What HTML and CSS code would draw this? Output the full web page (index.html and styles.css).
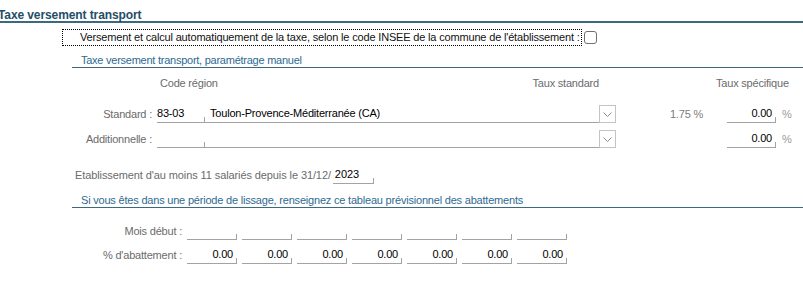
FILE: index.html
```html
<!DOCTYPE html>
<html lang="fr">
<head>
    <meta charset="UTF-8">
    <title>Taxe versement transport</title>
    <link rel="stylesheet" href="styles.css">
</head>
<body>

    <div class="title">Taxe versement transport</div>

    <div class="content">
        <div class="auto-row">
            <label class="focus">Versement et calcul automatiquement de la taxe, selon le code INSEE de la commune de l'établissement :</label>
            <span class="checkbox"></span>
        </div>

        <div class="section">Taxe versement transport, paramétrage manuel</div>

        <div class="rates rates-head">
            <div class="head-code">Code région</div>
            <div class="head-std">Taux standard</div>
            <div class="head-spec">Taux spécifique</div>
        </div>

        <div class="rates">
            <div class="label">Standard :</div>
            <div class="field code">83-03</div>
            <div class="combo">
                <span class="combo-text">Toulon-Provence-Méditerranée (CA)</span>
                <span class="combo-btn"><svg width="9" height="5" viewBox="0 0 9 5"><path d="M0.5 0.5 L4.5 4.5 L8.5 0.5" fill="none" stroke="#8a8a8a" stroke-width="1"/></svg></span>
            </div>
            <div class="std-rate">1.75 %</div>
            <div class="field num spec">0.00</div>
            <div class="pct">%</div>

            <div class="label">Additionnelle :</div>
            <div class="field code"></div>
            <div class="combo">
                <span class="combo-text"></span>
                <span class="combo-btn"><svg width="9" height="5" viewBox="0 0 9 5"><path d="M0.5 0.5 L4.5 4.5 L8.5 0.5" fill="none" stroke="#8a8a8a" stroke-width="1"/></svg></span>
            </div>
            <div class="std-rate"></div>
            <div class="field num spec">0.00</div>
            <div class="pct">%</div>
        </div>

        <div class="etab">
            <span>Etablissement d'au moins 11 salariés depuis le 31/12/</span>
            <span class="field year">2023</span>
        </div>

        <div class="section">Si vous êtes dans une période de lissage, renseignez ce tableau prévisionnel des abattements</div>

        <div class="lissage">
            <div class="label">Mois début :</div>
            <div class="field"></div>
            <div class="field"></div>
            <div class="field"></div>
            <div class="field"></div>
            <div class="field"></div>
            <div class="field"></div>
            <div class="field"></div>

            <div class="label">% d'abattement :</div>
            <div class="field num">0.00</div>
            <div class="field num">0.00</div>
            <div class="field num">0.00</div>
            <div class="field num">0.00</div>
            <div class="field num">0.00</div>
            <div class="field num">0.00</div>
            <div class="field num">0.00</div>
        </div>
    </div>

</body>
</html>
```

FILE: styles.css
```css
* {
    margin: 0;
    padding: 0;
    box-sizing: border-box;
}

body {
    font-family: "Liberation Sans", Arial, sans-serif;
    font-size: 11px;
    letter-spacing: -0.2px;
    color: #6b6b6b;
    background: #fff;
    width: 803px;
    height: 283px;
    overflow: hidden;
}

.title {
    font-weight: bold;
    font-size: 12px;
    letter-spacing: -0.1px;
    line-height: 12px;
    color: #1f4d69;
    padding-top: 9px;
    text-indent: -2px;
    border-bottom: 2px solid #3b6a7e;
}

.content {
    margin-left: 62px;
}

/* checkbox line */
.auto-row {
    display: flex;
    align-items: center;
    margin-top: 6px;
    height: 17px;
}

.focus {
    border: 1px dotted #000;
    color: #111;
    height: 17px;
    line-height: 15px;
    letter-spacing: -0.17px;
    padding: 0 1px 0 17px;
}

.checkbox {
    width: 13px;
    height: 13px;
    margin-left: 2px;
    border: 1px solid #6f6f6f;
    border-radius: 3px;
    background: #fff;
}

.section {
    margin-left: 10px;
    padding-left: 9px;
    color: #2e6a92;
    line-height: 13px;
    letter-spacing: -0.25px;
    border-bottom: 1px solid #3b6a7e;
}

.auto-row + .section {
    margin-top: 8px;
}

/* rates table */
.rates {
    display: grid;
    grid-template-columns: 85px 48px 394px 17px 89px 22px 49px 27px;
    grid-template-rows: 18px 18px;
    row-gap: 7px;
    margin-left: 10px;
    align-items: center;
}

.rates-head {
    grid-template-rows: 21px;
    margin-bottom: 7px;
    align-items: start;
    padding-top: 9px;
    line-height: 13px;
}

.rates-head div {
    grid-row: 1;
}

.head-code {
    grid-column: 2 / 4;
    padding-left: 3px;
}

.head-std {
    grid-column: 3 / 4;
    text-align: right;
}

.head-spec {
    grid-column: 6 / 9;
    padding-left: 11px;
}

.label {
    text-align: right;
    padding-right: 5px;
    line-height: 18px;
}

.field {
    position: relative;
    height: 18px;
    line-height: 17px;
    padding: 0 3px;
    color: #000;
    border-bottom: 1px solid #a3a3a3;
}

.field::after {
    content: '';
    position: absolute;
    right: 0;
    bottom: 0;
    width: 1px;
    height: 5px;
    background: #a3a3a3;
}

.field.num {
    text-align: right;
    padding-right: 4px;
}

.field.code {
    padding-left: 0;
}

.combo {
    grid-column: 3 / 5;
    display: flex;
    height: 18px;
}

.combo-text {
    flex: 1;
    color: #000;
    line-height: 17px;
    padding-left: 5px;
    border-bottom: 1px solid #a3a3a3;
}

.combo-btn {
    width: 17px;
    height: 18px;
    border: 1px solid #c4c4c4;
    display: flex;
    align-items: center;
    justify-content: center;
}

.std-rate {
    text-align: right;
    padding-right: 2px;
    color: #7c7c7c;
    line-height: 18px;
}

.spec {
    grid-column: 7;
}

.pct {
    color: #9a9a9a;
    padding-left: 6px;
    line-height: 18px;
}

/* etablissement */
.etab {
    display: flex;
    align-items: center;
    margin-top: 18px;
    margin-left: 13px;
    line-height: 18px;
    letter-spacing: -0.1px;
}

.field.year {
    width: 41px;
    margin-left: 2px;
    padding-left: 2px;
}

.etab + .section {
    margin-top: 10px;
    letter-spacing: -0.2px;
}

/* lissage */
.lissage {
    display: grid;
    grid-template-columns: 110px repeat(7, 50px);
    column-gap: 5px;
    grid-template-rows: 18px 18px;
    row-gap: 6px;
    margin-top: 14px;
    margin-left: 10px;
}

.lissage .label {
    padding-right: 0;
}
```
